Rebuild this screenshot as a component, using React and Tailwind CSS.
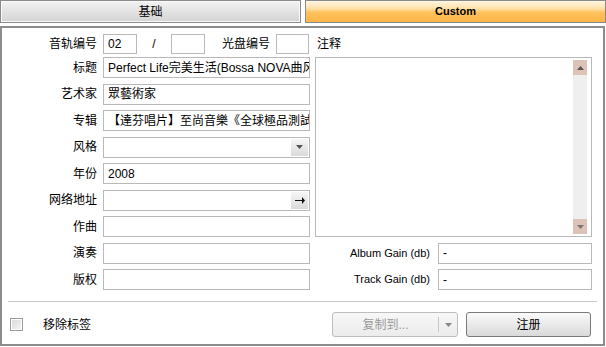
// App.jsx — tag editor "Custom" tab panel

const FONT = { fontFamily: '"Liberation Sans", "Noto Sans CJK SC", sans-serif' }

function Field({ value = '', className = '', children }) {
  return (
    <div
      className={`relative flex h-full items-center overflow-hidden whitespace-nowrap border border-[#b9b9b9] bg-white pl-[4px] text-[12px] leading-none text-black ${className}`}
    >
      <span>{value}</span>
      {children}
    </div>
  )
}

function SideButton({ children }) {
  return (
    <div className="absolute right-[1px] top-[1px] bottom-[1px] flex w-[17px] items-center justify-center bg-gradient-to-b from-[#f6f6f6] to-[#dadada]">
      {children}
    </div>
  )
}

function DownTri({ color = '#555' }) {
  return (
    <svg width="7" height="4" viewBox="0 0 7 4">
      <path d="M0 0h7L3.5 4z" fill={color} />
    </svg>
  )
}

const ROWS = [
  { label: '标题', value: 'Perfect Life完美生活(Bossa NOVA曲风的演奏)' },
  { label: '艺术家', value: '眾藝術家' },
  { label: '专辑', value: '【達芬唱片】至尚音樂《全球極品測試天碟》' },
  { label: '风格', kind: 'select' },
  { label: '年份', value: '2008' },
  { label: '网络地址', kind: 'link' },
  { label: '作曲' },
  { label: '演奏' },
  { label: '版权' },
]

export default function App() {
  return (
    <div className="h-[347px] w-[606px] overflow-hidden bg-white text-[12px] text-black" style={FONT}>
      {/* tabs */}
      <div className="flex h-[23px] gap-[4px]">
        <div className="flex w-[301px] items-center justify-center border border-[#8a8a8a] bg-gradient-to-b from-[#f3f3f3] to-[#d3d3d3] shadow-[inset_0_0_0_1px_#fafafa]">
          基础
        </div>
        <div className="flex flex-1 items-center justify-center border border-[#8a8a8a] bg-[linear-gradient(to_bottom,#fff6e2_0%,#ffe2ac_35%,#ffc15c_55%,#ffb649_100%)] text-[11px] font-bold">
          Custom
        </div>
      </div>

      {/* panel */}
      <div className="mt-[3px] flex h-[320px] w-[605px] flex-col border-2 border-[#8c8c8c] pt-[6px]">
        {/* first row */}
        <div className="flex h-[20px] items-center">
          <div className="w-[95px] text-right">音轨编号</div>
          <div className="ml-[6px] h-full w-[34px]">
            <Field value="02" className="text-[11px]" />
          </div>
          <div className="ml-[13px] w-[8px] text-center">/</div>
          <div className="ml-[13px] h-full w-[34px]">
            <Field />
          </div>
          <div className="ml-[17px]">光盘编号</div>
          <div className="ml-[6px] h-full w-[33px]">
            <Field />
          </div>
          <div className="ml-[8px]">注释</div>
        </div>

        {/* main grid */}
        <div className="mt-[3px] grid grid-cols-[101px_207px_282px] grid-rows-[repeat(9,21px)] gap-y-[5.5px]">
          {ROWS.map((r, i) => (
            <div key={r.label} className="contents">
              <div className="flex items-center justify-end pr-[6px]" style={{ gridRow: i + 1, gridColumn: 1 }}>
                {r.label}
              </div>
              <div style={{ gridRow: i + 1, gridColumn: 2 }}>
                <Field value={r.value} className={r.label === '年份' ? 'text-[11px]' : ''}>
                  {r.kind === 'select' && (
                    <SideButton>
                      <DownTri />
                    </SideButton>
                  )}
                  {r.kind === 'link' && (
                    <SideButton>
                      <svg width="10" height="7" viewBox="0 0 10 7">
                        <path d="M0 3h7V0l3 3.5L7 7V4H0z" fill="#111" />
                      </svg>
                    </SideButton>
                  )}
                </Field>
              </div>
            </div>
          ))}

          {/* notes */}
          <div className="col-start-3 row-span-7 row-start-1 pl-[5px]">
            <div className="flex h-full justify-end border border-[#b9b9b9] bg-white pb-[2px] pr-[4px] pt-[2px]">
              <div className="flex w-[14px] flex-col bg-[#efefef]">
                <div className="flex h-[15px] items-center justify-center bg-[#dcc3b8]">
                  <svg width="7" height="4" viewBox="0 0 7 4">
                    <path d="M0 4h7L3.5 0z" fill="#555" />
                  </svg>
                </div>
                <div className="flex-1" />
                <div className="flex h-[15px] items-center justify-center bg-[#dcc3b8]">
                  <DownTri color="#777" />
                </div>
              </div>
            </div>
          </div>

          <div className="col-start-3 row-start-8 flex items-center">
            <div className="flex-1 pr-[8px] text-right text-[11px]">Album Gain (db)</div>
            <div className="h-full w-[154px]">
              <Field value="-" />
            </div>
          </div>
          <div className="col-start-3 row-start-9 flex items-center">
            <div className="flex-1 pr-[8px] text-right text-[11px]">Track Gain (db)</div>
            <div className="h-full w-[154px]">
              <Field value="-" />
            </div>
          </div>
        </div>

        <div className="mx-[6px] mt-[11px] h-px bg-[#c8c8c8]" />

        {/* bottom bar */}
        <div className="mt-[10px] flex h-[25px] items-center pr-[12px]">
          <div className="ml-[8px] h-[13px] w-[13px] border border-[#9a9a9a] bg-gradient-to-br from-[#d8d8d8] to-[#f6f6f6] shadow-[inset_0_0_0_1px_#fff]" />
          <div className="ml-[20px]">移除标签</div>

          <div className="ml-auto flex h-full w-[126px] rounded-[3px] border border-[#bdbdbd] bg-gradient-to-b from-[#f7f7f7] to-[#ececec] text-[#9a9a9a]">
            <div className="flex flex-1 items-center justify-center">复制到...</div>
            <div className="my-[4px] w-px bg-[#c8c8c8]" />
            <div className="flex w-[18px] items-center justify-center">
              <DownTri color="#888" />
            </div>
          </div>

          <div className="ml-[8px] flex h-full w-[125px] items-center justify-center rounded-[3px] border border-[#7a7a7a] bg-gradient-to-b from-[#fbfbfb] to-[#d9d9d9]">
            注册
          </div>
        </div>
      </div>
    </div>
  )
}
